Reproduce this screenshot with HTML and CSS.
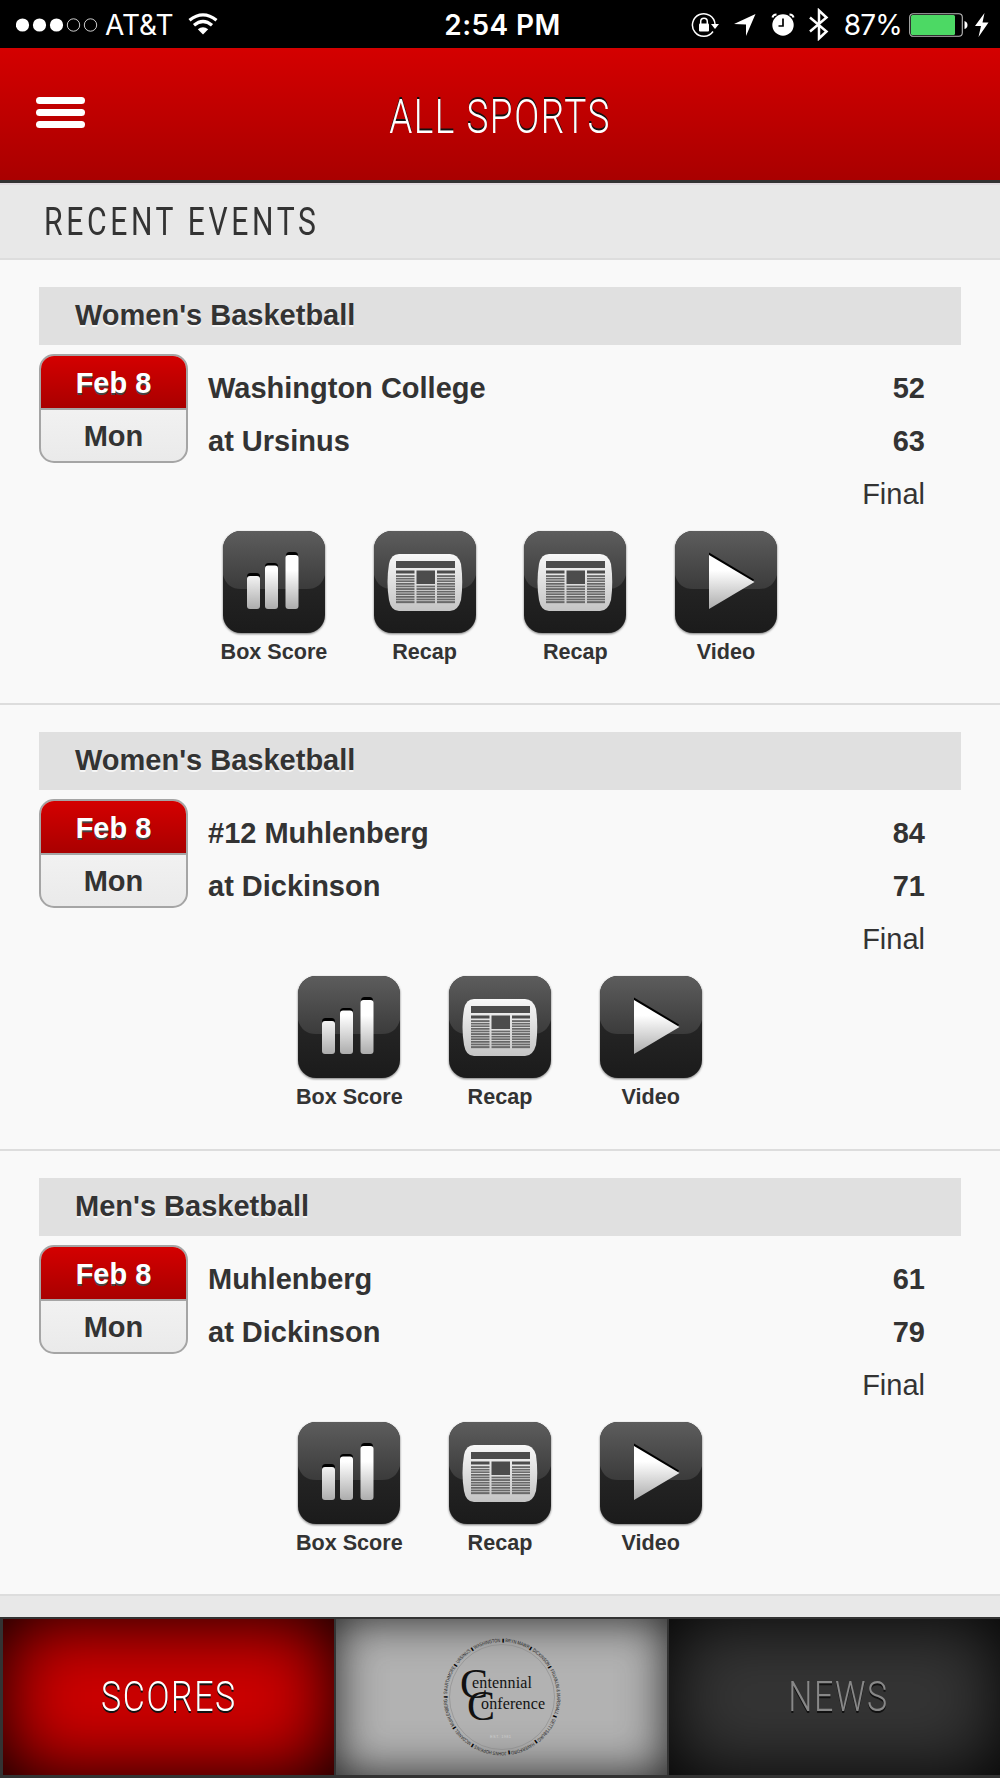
FILE: index.html
```html
<html>

<head>
  <meta charset="utf-8">
  <title>All Sports</title>
  <link rel="stylesheet" href="styles.css">
</head>

<body>
  <svg class="defs" width="0" height="0">
    <defs>
      <linearGradient id="tile" x1="0" y1="0" x2="0" y2="1">
        <stop offset="0" stop-color="#2e2e2e" />
        <stop offset="1" stop-color="#1b1b1b" />
      </linearGradient>
      <linearGradient id="gloss" x1="0" y1="0" x2="0" y2="1">
        <stop offset="0" stop-color="#5d5d5d" />
        <stop offset="1" stop-color="#3b3b3b" />
      </linearGradient>
      <linearGradient id="silver" gradientUnits="userSpaceOnUse" x1="0" y1="22" x2="0" y2="80">
        <stop offset="0.3" stop-color="#fff" />
        <stop offset="1" stop-color="#a8a8a8" />
      </linearGradient>
      <linearGradient id="paper" x1="0" y1="0" x2="0" y2="1">
        <stop offset="0" stop-color="#f8f8f8" />
        <stop offset="1" stop-color="#c4c4c4" />
      </linearGradient>
      <pattern id="lines" width="4" height="2.6" patternUnits="userSpaceOnUse">
        <rect width="4" height="1.7" fill="#666" />
      </pattern>
      <symbol id="base" viewBox="0 0 102 102">
        <rect width="102" height="102" rx="18" fill="url(#tile)" />
        <path d="M0 18A18 18 0 0 1 18 0H84A18 18 0 0 1 102 18V44Q98 58 84 58H18Q4 58 0 44Z" fill="url(#gloss)" />
      </symbol>
      <symbol id="box" viewBox="0 0 102 102">
        <use href="#base" />
        <g fill="#000">
          <rect x="24" y="42" width="13" height="30" rx="3.5" />
          <rect x="42" y="32" width="13" height="40" rx="3.5" />
          <rect x="63" y="21" width="12" height="50" rx="3.5" />
        </g>
        <g fill="url(#silver)">
          <rect x="24" y="45" width="13" height="33" rx="3" />
          <rect x="42" y="34.500" width="13" height="43.500" rx="3" />
          <rect x="62.500" y="24" width="13" height="54" rx="3" />
        </g>
      </symbol>
      <symbol id="recap" viewBox="0 0 102 102">
        <use href="#base" />
        <path d="M25 23H76Q84 23 87 33Q89.500 51 87 69Q84 80 76 80H25Q17 80 15 69Q12 51 15 33Q17 23 25 23Z" fill="url(#paper)" />
        <g fill="#4c4c4c">
          <rect x="22" y="30" width="59" height="7" />
          <rect x="22" y="39.500" width="18.500" height="3" />
          <rect x="42.500" y="39.500" width="18.500" height="13.500" />
          <rect x="63" y="39.500" width="18" height="3" />
        </g>
        <g fill="url(#lines)">
          <rect x="22" y="44" width="18.500" height="29" />
          <rect x="42.500" y="54" width="18.500" height="19" />
          <rect x="63" y="44" width="18" height="29" />
        </g>
      </symbol>
      <symbol id="video" viewBox="0 0 102 102">
        <use href="#base" />
        <path d="M34 21.500L79 48.500L77 52L34 27Z" fill="#000" />
        <path d="M34 24L79.500 51L34 78Z" fill="url(#silver)" />
      </symbol>
    </defs>
  </svg>

  <div class="status">
    <div class="status-left">
      <svg width="82" height="16" viewBox="0 0 82 16">
        <g fill="#fff">
          <circle cx="6.500" cy="8" r="6.600" />
          <circle cx="23.500" cy="8" r="6.600" />
          <circle cx="40.500" cy="8" r="6.600" />
        </g>
        <g fill="none" stroke="#fff" stroke-width="0.800">
          <circle cx="57.500" cy="8" r="6.200" />
          <circle cx="74.500" cy="8" r="6.200" />
        </g>
      </svg>
      <span class="carrier">AT&amp;T</span>
      <svg class="wifi" width="30" height="22" viewBox="0 0 30 22">
        <g fill="none" stroke="#fff" stroke-width="3.200">
          <path d="M1.500 7.300Q15-3.700 28.500 7.300" />
          <path d="M6 12.300Q15 4.700 24 12.300" />
        </g>
        <path d="M9.800 16.300Q15 12 20.200 16.300L15 21.500Z" fill="#fff" />
      </svg>
    </div>
    <span class="clock">2:54 PM</span>
    <div class="status-right">
      <svg width="28" height="26" viewBox="0 0 28 26">
        <path d="M22 19.500A11.300 11.300 0 1 1 24 12" fill="none" stroke="#fff" stroke-width="1.500" />
        <path d="M20 12H28L24 17Z" fill="#fff" />
        <rect x="8" y="11.500" width="10" height="8" rx="1" fill="#fff" />
        <path d="M9.700 12V9.500A3.300 3.300 0 0 1 16.300 9.500V12" fill="none" stroke="#fff" stroke-width="1.500" />
      </svg>
      <svg class="arrow" width="22" height="22" viewBox="0 0 22 22">
        <path d="M21.500 0L12 22V10.500L0 10Z" fill="#fff" />
      </svg>
      <svg class="alarm" width="24" height="23" viewBox="0 0 24 23">
        <circle cx="12" cy="12" r="10.700" fill="#fff" />
        <path d="M1.500 4.500Q2 1.500 5.500 1.500M18.500 1.500Q22 1.500 22.500 4.500" fill="none" stroke="#fff" stroke-width="2" />
        <path d="M12 5.500V13H7.500" fill="none" stroke="#000" stroke-width="1.700" />
      </svg>
      <svg class="bluetooth" width="20" height="33" viewBox="0 0 20 33">
        <path d="M1 9.500L17.500 23.500L10 30.500V2.500L17.500 9.500L1 23.500" fill="none" stroke="#fff" stroke-width="2.500" />
      </svg>
      <span class="percent">87%</span>
      <svg class="battery" width="60" height="24" viewBox="0 0 60 24">
        <rect x="0.700" y="0.700" width="52.600" height="22.600" rx="3.500" fill="none" stroke="#bbb" stroke-width="1.100" />
        <rect x="2" y="2" width="44" height="20" rx="1.500" fill="#4cd964" />
        <path d="M55.500 8Q58.500 9 58.500 12T55.500 16Z" fill="#fff" />
      </svg>
      <svg class="bolt" width="14" height="24" viewBox="0 0 14 24">
        <path d="M9.500 0L0 13H6L3.500 24L13.500 9.500H7.500Z" fill="#fff" />
      </svg>
    </div>
  </div>

  <div class="header">
    <div class="menu">
      <span></span>
      <span></span>
      <span></span>
    </div>
    <h1>ALL SPORTS</h1>
  </div>

  <div class="section-title">
    <h2>RECENT EVENTS</h2>
  </div>

  <div id="eventsContainer"></div>
  <div class="next-section"></div>

  <div class="tabs">
    <div class="tab active"><span class="tab-text scores">SCORES</span></div>
    <div class="tab logo">
      <svg width="122" height="122" viewBox="-61 -61 122 122">
        <defs>
          <path id="ring" d="M0 -55A55 55 0 1 1 -0.100 -55" />
        </defs>
        <circle r="52.500" fill="none" stroke="#8a8a8a" stroke-width="0.600" />
        <text class="ring-text">
          <textPath href="#ring" textLength="343" lengthAdjust="spacingAndGlyphs"><tspan>▮</tspan> BRYN MAWR <tspan>▮</tspan> DICKINSON <tspan>▮</tspan> FRANKLIN &amp; MARSHALL <tspan>▮</tspan> GETTYSBURG <tspan>▮</tspan> HAVERFORD <tspan>▮</tspan> JOHNS HOPKINS <tspan>▮</tspan> MCDANIEL <tspan>▮</tspan> MUHLENBERG <tspan>▮</tspan> SWARTHMORE <tspan>▮</tspan> URSINUS <tspan>▮</tspan> WASHINGTON</textPath>
        </text>
        <text class="logo-text"><tspan class="cap" x="-42" y="1">C</tspan><tspan x="-30" y="-9.500" textLength="60">entennial</tspan></text>
        <text class="logo-text"><tspan class="cap" x="-35" y="22.500">C</tspan><tspan x="-21" y="12" textLength="64">onference</tspan></text>
        <text class="logo-year" x="-12" y="41" textLength="21">EST. 1981</text>
      </svg>
    </div>
    <div class="tab news"><span class="tab-text">NEWS</span></div>
  </div>

  <script>
    const events = [
      { sport: "Women's Basketball", away: "Washington College", home: "at Ursinus", scores: [52, 63], links: ["box", "recap", "recap", "video"] },
      { sport: "Women's Basketball", away: "#12 Muhlenberg", home: "at Dickinson", scores: [84, 71], links: ["box", "recap", "video"] },
      { sport: "Men's Basketball", away: "Muhlenberg", home: "at Dickinson", scores: [61, 79], links: ["box", "recap", "video"] }
    ];
    const labels = { box: "Box Score", recap: "Recap", video: "Video" };

    const eventsContainer = document.getElementById("eventsContainer");
    events.forEach((event) => {
      const item = document.createElement('div');
      item.className = "event";
      item.innerHTML = `<div class="sport">${event.sport}</div>
        <div class="game">
          <div class="date"><div class="day">Feb 8</div><div class="weekday">Mon</div></div>
          <div class="teams">
            <div class="team"><span>${event.away}</span><span>${event.scores[0]}</span></div>
            <div class="team"><span>${event.home}</span><span>${event.scores[1]}</span></div>
            <div class="final">Final</div>
          </div>
        </div>
        <div class="links">
          ${event.links.map(link => `<div class="link"><svg class="icon"><use href="#${link}" /></svg><span>${labels[link]}</span></div>`).join("")}
        </div>`;
      eventsContainer.appendChild(item);
    })
  </script>
</body>

</html>
```
FILE: styles.css
```css
* {
  box-sizing: border-box;
}

body {
  margin: 0;
  width: 1000px;
  height: 1778px;
  overflow: hidden;
  display: flex;
  flex-direction: column;
  background-color: #f9f9f9;
  color: #333;
  font-family: "Liberation Sans", Arial, sans-serif;
}

.defs {
  position: absolute;
}

.status {
  display: grid;
  grid-template-columns: 1fr auto 1fr;
  align-items: center;
  height: 48px;
  flex: none;
  padding: 1px 11px 0 16px;
  background-color: black;
  color: white;
  font-family: Inter, sans-serif;
  font-size: 28px;
}

.status-left,
.status-right {
  display: flex;
  align-items: center;
}

.status-right {
  justify-content: flex-end;
}

.carrier {
  margin-left: 7px;
}

.wifi {
  margin: -2px 0 0 14px;
}

.clock {
  font-weight: 600;
  letter-spacing: 0.4px;
}

.arrow {
  margin-left: 15px;
}

.alarm {
  margin-left: 15px;
}

.bluetooth {
  margin-left: 14px;
}

.percent {
  margin-left: 15px;
  letter-spacing: -0.8px;
}

.battery {
  margin-left: 7px;
}

.bolt {
  margin-left: 6px;
}

.header {
  display: grid;
  grid-template-columns: 100px 1fr 100px;
  align-items: center;
  height: 135px;
  flex: none;
  background: linear-gradient(#d40000, #a90000);
  border-bottom: 3px solid #333;
}

.menu {
  display: flex;
  flex-direction: column;
  gap: 5px;
  margin: -4px 0 0 36px;
}

.menu span {
  width: 49px;
  height: 7px;
  border-radius: 4px;
  background-color: white;
}

h1,
h2 {
  margin: 0;
  font-family: Roboto, sans-serif;
  font-weight: 300;
}

h1 {
  justify-self: center;
  margin-top: 5px;
  font-size: 48px;
  letter-spacing: 2px;
  color: white;
  text-shadow: 0 -2px 0 #111;
  transform: scaleX(0.77);
}

.section-title {
  display: flex;
  align-items: center;
  height: 77px;
  flex: none;
  padding-left: 44px;
  background-color: #e8e8e8;
  border-top: 2px solid #e2dbe0;
  border-bottom: 2px solid #ddd;
}

h2 {
  font-size: 38px;
  font-weight: 400;
  letter-spacing: 4.6px;
  transform: scaleX(0.792);
  transform-origin: left;
}

.event {
  height: 445.4px;
  padding: 27px 39px 0;
  border-bottom: 2px solid #ddd;
}

.sport {
  height: 58px;
  line-height: 57px;
  padding-left: 36px;
  background-color: #e0e0e0;
  font-size: 29px;
  font-weight: bold;
  text-shadow: 0 2px 0 #f5f5f5;
}

.game {
  display: flex;
  margin-top: 9px;
}

.date {
  width: 149px;
  height: 109px;
  border: 2px solid #a5a5a5;
  border-radius: 15px;
  overflow: hidden;
  text-align: center;
  font-size: 29px;
  font-weight: bold;
  background: linear-gradient(#f9f9f9, #eaeaea);
}

.day {
  height: 54px;
  line-height: 54px;
  background: linear-gradient(#d40000, #a90000);
  border-bottom: 2px solid #a5a5a5;
  color: white;
  text-shadow: 0 2px 0 #444;
}

.weekday {
  line-height: 52px;
}

.teams {
  flex: 1;
  padding: 8px 36px 0 20px;
  font-size: 29px;
  line-height: 53px;
}

.team {
  display: flex;
  justify-content: space-between;
  font-weight: bold;
}

.final {
  text-align: right;
}

.links {
  display: flex;
  justify-content: center;
  margin-top: 10px;
}

.link {
  width: 150.7px;
  display: flex;
  flex-direction: column;
  align-items: center;
  font-size: 21.6px;
  font-weight: bold;
}

.icon {
  width: 102px;
  height: 102px;
  margin-bottom: 6px;
  filter: drop-shadow(0 1px 1px #777);
}

.next-section {
  flex: 1;
  background-color: #e8e8e8;
}

.tabs {
  display: grid;
  grid-template-columns: 331px 331px 333px;
  gap: 2px;
  height: 161px;
  flex: none;
  padding: 2px 0 3px 3px;
  background-color: #333;
}

.tab {
  display: flex;
  align-items: center;
  justify-content: center;
  background-color: #353535;
  box-shadow: inset 0 0 75px black;
}

.active {
  background-color: #cc0000;
}

.logo {
  background-color: #b2b2b2;
  box-shadow: inset 0 0 45px #222;
}

.tab-text {
  margin-top: -2px;
  font-family: Roboto, sans-serif;
  font-weight: 300;
  font-size: 43px;
  letter-spacing: 2px;
  color: #888;
  text-shadow: 0 2px 0 #111;
  transform: scaleX(0.79);
}

.news {
  padding-left: 7px;
}

.scores {
  color: white;
}

.ring-text {
  font-size: 5px;
  fill: #222;
}

.ring-text tspan {
  fill: #000;
}

.logo-text {
  font-family: "Liberation Serif", serif;
  font-size: 16px;
  fill: #111;
}

.cap {
  font-size: 42px;
}

.logo-year {
  font-size: 4px;
  fill: #ccc;
}
```
